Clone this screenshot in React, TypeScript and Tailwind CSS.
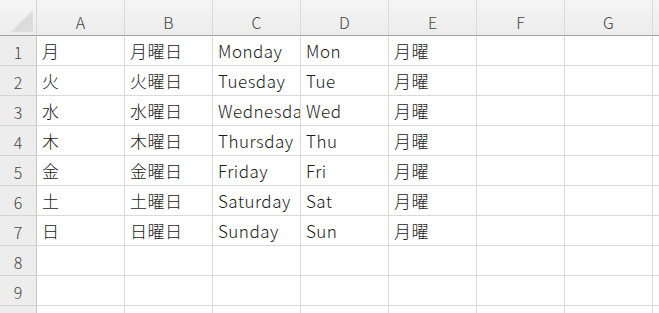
import React from "react";

const cols = ["A", "B", "C", "D", "E", "F", "G"];
const data: string[][] = [
  ["月", "月曜日", "Monday", "Mon", "月曜"],
  ["火", "火曜日", "Tuesday", "Tue", "月曜"],
  ["水", "水曜日", "Wednesday", "Wed", "月曜"],
  ["木", "木曜日", "Thursday", "Thu", "月曜"],
  ["金", "金曜日", "Friday", "Fri", "月曜"],
  ["土", "土曜日", "Saturday", "Sat", "月曜"],
  ["日", "日曜日", "Sunday", "Sun", "月曜"],
  [],
  [],
  [],
];

const font = { fontFamily: '"Noto Sans CJK JP", "Noto Sans", sans-serif' };

export default function App() {
  return (
    <div className="w-[659px] h-[313px] overflow-hidden bg-white" style={font}>
      <div className="grid grid-cols-[37px_repeat(7,88px)_88px] grid-rows-[36px_repeat(10,30px)]">
        <div className="relative border-r border-b border-r-[#d6d6d6] border-b-[#a0a0a0] bg-gradient-to-b from-[#f5f5f5] to-[#ececec]">
          <svg className="absolute right-[3px] bottom-[3px]" width="22" height="22" viewBox="0 0 22 22">
            <polygon points="22,0 22,22 0,22" fill="#dcdcdc" />
          </svg>
        </div>
        {cols.concat(["H"]).map((c, i) => (
          <div
            key={c}
            className="flex items-end justify-center pb-[5px] bg-gradient-to-b from-[#f5f5f5] to-[#ececec] border-r border-b border-r-[#dadada] border-b-[#a0a0a0] text-[16px] leading-none text-[#444444] font-light"
          >
            {i < 7 ? c : ""}
          </div>
        ))}
        {data.map((row, r) => (
          <React.Fragment key={r}>
            <div className="flex items-center justify-center bg-[#ededed] border-r border-b border-r-[#c8c8c8] border-b-[#d4d4d4] text-[16px] leading-none text-[#444444] font-light pt-[3px]">
              {r + 1}
            </div>
            {Array.from({ length: 8 }).map((_, ci) => (
              <div
                key={ci}
                className="flex items-center overflow-hidden whitespace-nowrap border-r border-b border-[#d9d9d9] pl-[5px] pb-[1px] text-[17px] leading-none tracking-[0.5px] text-[#1a1a1a] font-light"
              >
                {row[ci] ?? ""}
              </div>
            ))}
          </React.Fragment>
        ))}
      </div>
    </div>
  );
}
